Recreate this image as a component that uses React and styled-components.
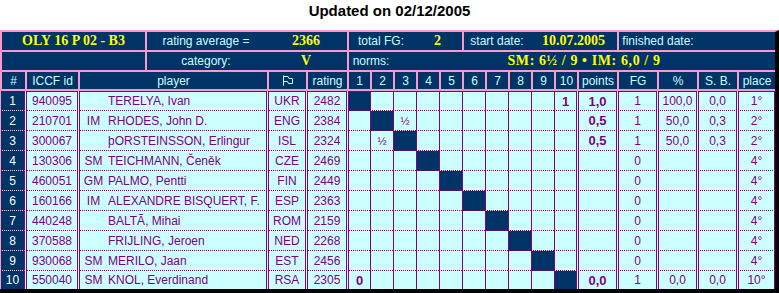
import React from "react";
import styled, { createGlobalStyle } from "styled-components";

const NAVY = "#003366";
const PINK = "#ff99cc";
const CYAN = "#ccffff";
const PURPLE = "#800080";
const YELLOW = "#ffff00";

const COLS = "25px 53px 189px 39px 41px repeat(10, 23px) 40px 40px 40px 40px 38px";

const GlobalStyle = createGlobalStyle`
  body {
    margin: 0;
    background: #fff;
    font-family: "Liberation Sans", Arial, sans-serif;
  }
  * { box-sizing: border-box; }
`;

const Title = styled.h1`
  margin: 0;
  height: 30px;
  padding-top: 2px;
  font-size: 15px;
  line-height: 18px;
  font-weight: bold;
  text-align: center;
  color: #000;
`;

const Board = styled.div`
  width: 779px;
  background: ${PINK};
  border-top: 2px solid ${PINK};
  border-right: 4px solid #000;
  border-bottom: 4px solid #000;
`;

const InfoRow = styled.div`
  display: grid;
  grid-template-columns: 145px 202px 115px 155px 158px;
  height: 18px;
  margin-bottom: 2px;
`;

const InfoCell = styled.div`
  display: flex;
  align-items: center;
  background: ${NAVY};
  border-left: 2px solid ${PINK};
  color: ${CYAN};
  font-size: 12px;
`;

const Label = styled.span`
  width: ${(p) => p.$w}px;
  text-align: center;
`;

const Value = styled.span`
  flex: 1;
  text-align: center;
  color: ${YELLOW};
  font-family: "Liberation Serif", "Times New Roman", serif;
  font-weight: bold;
  font-size: 14px;
  white-space: pre;
  letter-spacing: ${(p) => p.$spread || 0}px;
`;

const HeadRow = styled.div`
  display: grid;
  grid-template-columns: ${COLS};
  height: 17px;
  margin-bottom: 2px;
`;

const HeadCell = styled.div`
  display: flex;
  align-items: center;
  justify-content: center;
  background: ${NAVY};
  border-left: 2px solid ${PINK};
  color: ${CYAN};
  font-size: 12px;
`;

const DataRow = styled.div`
  display: grid;
  grid-template-columns: ${COLS};
  height: ${(p) => (p.$last ? 18 : 20)}px;
  background: ${CYAN};
  color: ${PURPLE};
  font-size: 12px;
`;

const NumCell = styled.div`
  display: flex;
  align-items: center;
  justify-content: center;
  background: ${NAVY};
  color: #fff;
  border-left: 1px solid ${PINK};
  border-right: 1px solid ${PURPLE};
  border-bottom: ${(p) => (p.$last ? "0" : "1px dotted #ffccff")};
`;

const Cell = styled.div`
  display: flex;
  align-items: center;
  justify-content: ${(p) => (p.$left ? "flex-start" : "center")};
  margin-left: 1px;
  border-left: 1px solid ${PURPLE};
  border-right: 1px solid ${PURPLE};
  border-top: ${(p) => (p.$first ? `1px solid ${PURPLE}` : "0")};
  border-bottom: ${(p) => (p.$last ? "0" : `1px dotted ${PURPLE}`)};
  font-weight: ${(p) => (p.$bold ? "bold" : "normal")};
  font-size: ${(p) => (p.$bold ? 13 : 12)}px;
  white-space: nowrap;
  overflow: hidden;
`;

const GameCell = styled.div`
  display: flex;
  align-items: center;
  justify-content: center;
  margin-left: ${(p) => (p.$col === 1 ? "1px" : "0")};
  border-left: 1px solid ${PURPLE};
  border-right: ${(p) => (p.$col === 10 ? `1px solid ${PURPLE}` : "0")};
  border-top: ${(p) => (p.$first ? `1px solid ${PURPLE}` : "0")};
  border-bottom: ${(p) => (p.$last ? "0" : `1px dotted ${PURPLE}`)};
  background: ${(p) => (p.$self ? NAVY : "transparent")};
  font-weight: ${(p) => (p.$half ? "normal" : "bold")};
  font-size: ${(p) => (p.$half ? 11 : 13)}px;
`;

const Honour = styled.span`
  width: 27px;
  text-align: center;
`;

const Name = styled.span`
  margin-left: 1px;
`;

const FlagIcon = () => (
  <svg width="12" height="11" viewBox="0 0 12 11">
    <path d="M1.5 0.5 V10.5" stroke={CYAN} strokeWidth="1" fill="none" />
    <path d="M1.5 1.5 H6 L7 3.5 H10.5 V8.5 H6.5 L5.5 6.5 H1.5" stroke={CYAN} strokeWidth="1" fill="none" />
  </svg>
);

const players = [
  { id: "940095", t: "", name: "TERELYA, Ivan", fed: "UKR", r: 2482, res: { 10: "1" }, pts: "1,0", fg: "1", pct: "100,0", sb: "0,0", pl: "1°" },
  { id: "210701", t: "IM", name: "RHODES, John D.", fed: "ENG", r: 2384, res: { 3: "½" }, pts: "0,5", fg: "1", pct: "50,0", sb: "0,3", pl: "2°" },
  { id: "300067", t: "", name: "þORSTEINSSON, Erlingur", fed: "ISL", r: 2324, res: { 2: "½" }, pts: "0,5", fg: "1", pct: "50,0", sb: "0,3", pl: "2°" },
  { id: "130306", t: "SM", name: "TEICHMANN, Čeněk", fed: "CZE", r: 2469, res: {}, pts: "", fg: "0", pct: "", sb: "", pl: "4°" },
  { id: "460051", t: "GM", name: "PALMO, Pentti", fed: "FIN", r: 2449, res: {}, pts: "", fg: "0", pct: "", sb: "", pl: "4°" },
  { id: "160166", t: "IM", name: "ALEXANDRE BISQUERT, F.", fed: "ESP", r: 2363, res: {}, pts: "", fg: "0", pct: "", sb: "", pl: "4°" },
  { id: "440248", t: "", name: "BALTÃ, Mihai", fed: "ROM", r: 2159, res: {}, pts: "", fg: "0", pct: "", sb: "", pl: "4°" },
  { id: "370588", t: "", name: "FRIJLING, Jeroen", fed: "NED", r: 2268, res: {}, pts: "", fg: "0", pct: "", sb: "", pl: "4°" },
  { id: "930068", t: "SM", name: "MERILO, Jaan", fed: "EST", r: 2456, res: {}, pts: "", fg: "0", pct: "", sb: "", pl: "4°" },
  { id: "550040", t: "SM", name: "KNOL, Everdinand", fed: "RSA", r: 2305, res: { 1: "0" }, pts: "0,0", fg: "1", pct: "0,0", sb: "0,0", pl: "10°" },
];

const games = [1, 2, 3, 4, 5, 6, 7, 8, 9, 10];

export default function App() {
  return (
    <>
      <GlobalStyle />
      <Title>Updated on 02/12/2005</Title>
      <Board>
        <InfoRow>
          <InfoCell>
            <Value>OLY 16 P 02 - B3</Value>
          </InfoCell>
          <InfoCell>
            <Label $w={118}>rating average =</Label>
            <Value>2366</Value>
          </InfoCell>
          <InfoCell>
            <Label $w={64}>total FG:</Label>
            <Value>2</Value>
          </InfoCell>
          <InfoCell>
            <Label $w={66}>start date:</Label>
            <Value>10.07.2005</Value>
          </InfoCell>
          <InfoCell>
            <Label $w={78}>finished date:</Label>
            <Value />
          </InfoCell>
        </InfoRow>
        <InfoRow style={{ gridTemplateColumns: "145px 202px 428px" }}>
          <InfoCell />
          <InfoCell>
            <Label $w={118}>category:</Label>
            <Value>V</Value>
          </InfoCell>
          <InfoCell>
            <Label $w={44}>norms:</Label>
            <Value $spread={0.6}>SM: 6½ / 9 • IM: 6,0 / 9</Value>
          </InfoCell>
        </InfoRow>
        <HeadRow>
          <HeadCell>#</HeadCell>
          <HeadCell>ICCF id</HeadCell>
          <HeadCell>player</HeadCell>
          <HeadCell>
            <FlagIcon />
          </HeadCell>
          <HeadCell>rating</HeadCell>
          {games.map((g) => (
            <HeadCell key={g}>{g}</HeadCell>
          ))}
          <HeadCell>points</HeadCell>
          <HeadCell>FG</HeadCell>
          <HeadCell>%</HeadCell>
          <HeadCell>S. B.</HeadCell>
          <HeadCell>place</HeadCell>
        </HeadRow>
        {players.map((p, i) => {
          const first = i === 0;
          const last = i === players.length - 1;
          return (
            <DataRow key={p.id} $last={last}>
              <NumCell $last={last}>{i + 1}</NumCell>
              <Cell $first={first} $last={last}>{p.id}</Cell>
              <Cell $first={first} $last={last} $left>
                <Honour>{p.t}</Honour>
                <Name>{p.name}</Name>
              </Cell>
              <Cell $first={first} $last={last}>{p.fed}</Cell>
              <Cell $first={first} $last={last}>{p.r}</Cell>
              {games.map((g) => (
                <GameCell
                  key={g}
                  $col={g}
                  $first={first}
                  $last={last}
                  $self={g === i + 1}
                  $half={p.res[g] === "½"}
                >
                  {p.res[g] || ""}
                </GameCell>
              ))}
              <Cell $first={first} $last={last} $bold>{p.pts}</Cell>
              <Cell $first={first} $last={last}>{p.fg}</Cell>
              <Cell $first={first} $last={last}>{p.pct}</Cell>
              <Cell $first={first} $last={last}>{p.sb}</Cell>
              <Cell $first={first} $last={last}>{p.pl}</Cell>
            </DataRow>
          );
        })}
      </Board>
    </>
  );
}
